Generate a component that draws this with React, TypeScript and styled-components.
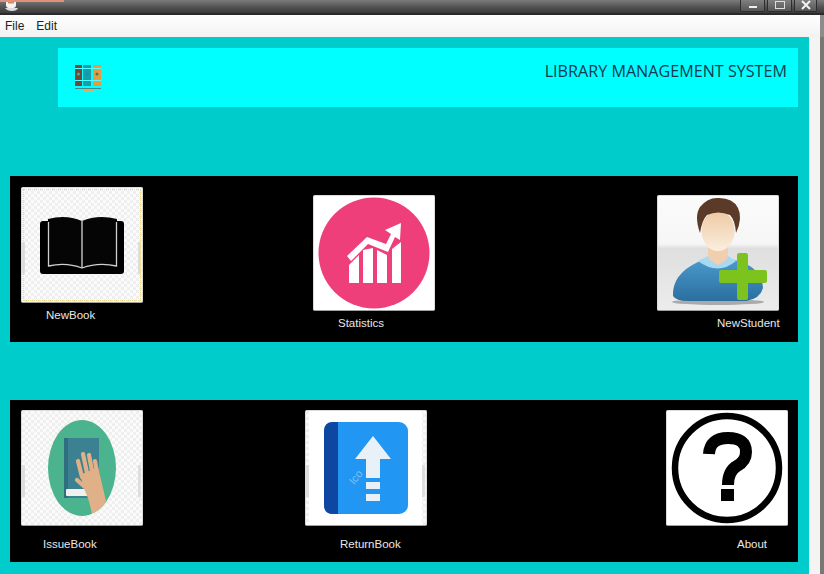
import * as React from 'react';
import styled, { createGlobalStyle } from 'styled-components';

const GlobalStyle = createGlobalStyle`
  html, body {
    margin: 0;
    padding: 0;
    background: #f3f3f1;
    overflow: hidden;
  }
`;

const Frame = styled.div`
  width: 824px;
  height: 574px;
  display: flex;
  flex-direction: column;
  font-family: 'Liberation Sans', Arial, sans-serif;
  overflow: hidden;
`;

const TitleBar = styled.div`
  height: 13px;
  flex: none;
  display: flex;
  justify-content: space-between;
  background: linear-gradient(#7c7c7c 0, #6a6a6a 3px, #4e4e4e 8px, #3c3c3c 100%);
  border-bottom: 2px solid #2a2a2a;
`;

const TitleAccent = styled.div`
  width: 64px;
  height: 2px;
  background: #e0917c;
`;

const CupIcon = styled.svg`
  display: block;
  width: 16px;
  height: 11px;
  margin-left: 3px;
`;

const WindowButtons = styled.div`
  display: flex;
  gap: 2px;
  margin-right: 7px;
`;

const WindowButton = styled.div<{ $w: number }>`
  width: ${p => p.$w}px;
  height: 12px;
  display: flex;
  align-items: center;
  justify-content: center;
  background: linear-gradient(#808080, #565656);
  border: 1px solid #2e2e2e;
  border-top: none;
  border-radius: 0 0 2px 2px;
  box-sizing: border-box;
`;

const ButtonIcon = styled.svg`
  width: 14px;
  height: 11px;
`;

const MenuBar = styled.div`
  height: 22px;
  flex: none;
  display: flex;
  align-items: center;
  gap: 12px;
  padding-left: 5px;
  font-size: 12px;
  color: #222;
  background: linear-gradient(#ffffff, #f2f2f2);
  border-right: 4px solid #8c8c8c;
`;

const Body = styled.div`
  flex: 1;
  display: flex;
  min-height: 0;
`;

const Content = styled.div`
  width: 799px;
  height: 536px;
  padding: 11px 0 0 10px;
  background: #00cccc;
  display: flex;
  flex-direction: column;
`;

const SideStrip = styled.div`
  flex: 1;
  display: flex;
  justify-content: flex-end;
  background: #f4f4f2;
`;

const SideEdge = styled.div`
  width: 4px;
  background: #777;
`;

const Header = styled.div`
  height: 59px;
  width: 740px;
  margin-left: 48px;
  background: #00ffff;
  display: flex;
  justify-content: space-between;
  box-sizing: border-box;
  padding: 14px 11px 0 16px;
`;

const Logo = styled.svg`
  display: block;
  width: 30px;
  height: 30px;
`;

const Title = styled.div`
  font-family: 'Open Sans', sans-serif;
  font-size: 16.15px;
  line-height: 20px;
  margin-top: -1px;
  color: #123b50;
`;

const Panel = styled.div<{ $h: number; $top: number }>`
  width: 788px;
  height: ${p => p.$h}px;
  margin-top: ${p => p.$top}px;
  background: #000;
  display: flex;
`;

const Cell = styled.div<{ $left: number; $top: number }>`
  width: 122px;
  margin-left: ${p => p.$left}px;
  padding-top: ${p => p.$top}px;
  flex: none;
`;

const Tile = styled.div<{ $focus?: boolean }>`
  position: relative;
  width: 122px;
  height: 116px;
  box-sizing: border-box;
  background: #fff;
  border: 1px solid #dcdcdc;
  border-bottom-color: #a0a0a0;
  border-radius: 2px;
  overflow: hidden;
  ${p =>
    p.$focus
      ? `&::after {
          content: '';
          position: absolute;
          inset: 1px;
          border: 1px dotted #ecd98c;
        }`
      : ''}
`;

const TileArt = styled.svg`
  display: block;
  width: 120px;
  height: 114px;
`;

const Caption = styled.div<{ $top: number; $left: number }>`
  font-size: 11.5px;
  line-height: 13px;
  color: #e8e8e8;
  white-space: nowrap;
  margin-top: ${p => p.$top}px;
  margin-left: ${p => p.$left}px;
`;

const ART_BOX = '0 0 120 114';

// light checker and the grey slivers at the edges of the stock pictures
const StockBackdrop = ({ id }: { id: string }) => (
  <>
    <defs>
      <pattern id={id} width="6" height="6" patternUnits="userSpaceOnUse">
        <rect width="6" height="6" fill="#fbfbfb" />
        <rect width="3" height="3" fill="#efefef" />
        <rect x="3" y="3" width="3" height="3" fill="#efefef" />
      </pattern>
    </defs>
    <rect width="120" height="114" fill={`url(#${id})`} />
    <rect x="0" y="54" width="3" height="32" fill="#dedede" />
    <rect x="116" y="54" width="3" height="32" fill="#dedede" />
  </>
);

const LogoIcon = () => (
  <Logo viewBox="0 0 30 30">
    <rect x="1" y="3" width="7" height="21" fill="#6d4a3a" />
    <rect x="9" y="3" width="8" height="21" fill="#159fae" />
    <rect x="19" y="3" width="8" height="21" fill="#e99a3e" />
    <path d="M1 6.5h26M1 18.5h26" stroke="#5ff" strokeWidth="1" />
    <circle cx="4.5" cy="12" r="1.5" fill="#3fb59b" />
    <circle cx="13" cy="12" r="1.5" fill="#2b8c98" />
    <circle cx="23" cy="12" r="1.5" fill="#3a7c6e" />
    <rect x="1" y="26" width="26" height="1" fill="#3b8c8c" />
    <rect x="10" y="28" width="9" height="1" fill="#e2b25a" />
  </Logo>
);

const BookArt = () => (
  <TileArt viewBox={ART_BOX}>
    <StockBackdrop id="bookBg" />
    <rect x="18" y="33" width="84" height="53" rx="3" fill="#000" />
    <path d="M26 31 Q44 26 60 33 Q76 26 95 31 V78 Q76 74 60 80 Q44 74 26 78 Z" fill="#050505" />
    <path d="M26.5 34 V78 Q44 74 60 80 Q76 74 94.5 78 V34" fill="none" stroke="#cfcfcf" strokeWidth="1.3" />
    <path d="M60 33 V80" stroke="#d6d6d6" strokeWidth="1.3" />
  </TileArt>
);

const StatsArt = () => (
  <TileArt viewBox={ART_BOX}>
    <rect width="120" height="114" fill="#fff" />
    <circle cx="60" cy="57" r="55.5" fill="#ee3f7a" />
    <g fill="#fff">
      <path d="M35 69 L45 59 V87 H35 Z" />
      <path d="M49 54 L59 52 V87 H49 Z" />
      <path d="M63 54 L73 59 V87 H63 Z" />
      <path d="M78 53 L87 46 V87 H78 Z" />
      <path d="M33 60 L53 41 L72 48 L77 38 L71 34 L87 27 L86 44 L81 41 L74 56 L54 48 L37 65 Z" />
    </g>
  </TileArt>
);

const StudentArt = () => (
  <TileArt viewBox={ART_BOX}>
    <defs>
      <linearGradient id="wall" x1="0" y1="0" x2="0" y2="1">
        <stop offset="0" stopColor="#fbfbfb" />
        <stop offset="0.42" stopColor="#f6f6f6" />
        <stop offset="0.46" stopColor="#dfdfdf" />
        <stop offset="1" stopColor="#ececec" />
      </linearGradient>
      <linearGradient id="shirt" x1="0" y1="0" x2="0" y2="1">
        <stop offset="0" stopColor="#4c9bce" />
        <stop offset="1" stopColor="#2a6f9e" />
      </linearGradient>
      <linearGradient id="face" x1="0" y1="0" x2="0" y2="1">
        <stop offset="0" stopColor="#eec9a2" />
        <stop offset="1" stopColor="#fbeee0" />
      </linearGradient>
    </defs>
    <rect width="120" height="114" fill="url(#wall)" />
    <ellipse cx="60" cy="106" rx="46" ry="3" fill="#8f8f8f" opacity="0.7" />
    <path d="M15 100 Q14 78 40 66 L52 62 H68 L84 66 Q104 74 105 92 Q102 103 88 105 H30 Q18 105 15 100 Z" fill="url(#shirt)" />
    <path d="M40 65 L50 60 H70 L78 65 Q60 80 40 65 Z" fill="#a9d8f2" />
    <path d="M50 44 H70 V60 Q70 64 60 69 Q50 64 50 60 Z" fill="#f0cfae" />
    <ellipse cx="60" cy="35" rx="16.5" ry="20" fill="url(#face)" />
    <path d="M42 37 Q36 20 42 11 Q50 1 61 2 Q75 2 80 12 Q85 22 78 37 Q77 24 72 19 Q60 14 49 19 Q44 24 42 37 Z" fill="#5b3a28" />
    <path d="M79 59 Q79 57 81 57 H88 Q90 57 90 59 V74 H107 Q109 74 109 76 V85 Q109 87 107 87 H90 V102 Q90 104 88 104 H81 Q79 104 79 102 V87 H63 Q61 87 61 85 V76 Q61 74 63 74 H79 Z" fill="#7cc31e" />
  </TileArt>
);

const IssueArt = () => (
  <TileArt viewBox={ART_BOX}>
    <StockBackdrop id="issueBg" />
    <defs>
      <clipPath id="issueOval">
        <ellipse cx="60" cy="57" rx="34" ry="48" />
      </clipPath>
    </defs>
    <ellipse cx="60" cy="57" rx="34" ry="48" fill="#4cb38f" />
    <rect x="42" y="27" width="35" height="60" fill="#3b8191" />
    <rect x="42" y="27" width="4" height="60" fill="#2f6e7c" />
    <rect x="44" y="78" width="24" height="7" rx="1" fill="#f0f0ee" />
    <g clipPath="url(#issueOval)">
      <path d="M58 64 L76 56 L84 90 L76 108 L70 104 Q68 90 63 80 Z" fill="#e0b088" />
      <path d="M56 50 L60 66 M61 43 L65 62 M67 44 L70 60 M73 50 L75 62 M55 69 L64 77" fill="none" stroke="#e0b088" strokeWidth="4.2" strokeLinecap="round" />
    </g>
  </TileArt>
);

const Watermark = styled.text`
  font-family: 'Liberation Sans', Arial, sans-serif;
  font-size: 11px;
  fill: #7fc0f6;
`;

const ReturnArt = () => (
  <TileArt viewBox={ART_BOX}>
    <StockBackdrop id="returnBg" />
    <rect x="3" y="0" width="113" height="114" fill="#fff" />
    <rect x="18" y="11" width="84" height="92" rx="9" fill="#2196f3" />
    <path d="M27 11 H32 V103 H27 Q18 103 18 94 V20 Q18 11 27 11 Z" fill="#0d47a1" />
    <path d="M67 25 L85 48 H74 V67 H60 V48 H49 Z" fill="#e8f1f8" />
    <rect x="60" y="71" width="14" height="7" fill="#e8f1f8" />
    <rect x="60" y="83" width="14" height="7" fill="#e8f1f8" />
    <Watermark transform="rotate(-52 50 72)" x="47" y="72">Ico</Watermark>
  </TileArt>
);

const AboutArt = () => (
  <TileArt viewBox={ART_BOX}>
    <rect width="120" height="114" fill="#fff" />
    <circle cx="60" cy="57" r="52" fill="none" stroke="#000" strokeWidth="6.5" />
    <path d="M42 43 Q43 27 61 27 Q79 27 79 41 Q79 50 70 55 Q61 60 61 74" fill="none" stroke="#000" strokeWidth="12" />
    <rect x="54" y="78" width="13" height="12" fill="#000" />
  </TileArt>
);

export default function App() {
  return (
    <Frame>
      <GlobalStyle />
      <TitleBar>
        <div>
          <TitleAccent />
          <CupIcon viewBox="0 0 16 11">
            <path d="M3 0h10v3q0 3-3 3H6Q3 6 3 3Z" fill="#f4f4f4" />
            <path d="M2 6h13q-1 3-6 3T2 6Z" fill="#dcdcdc" />
            <rect x="5" y="0" width="6" height="1.5" fill="#d98a5a" />
          </CupIcon>
        </div>
        <WindowButtons>
          <WindowButton $w={25}>
            <ButtonIcon viewBox="0 0 14 11">
              <rect x="3" y="6" width="8" height="2" fill="#eee" />
            </ButtonIcon>
          </WindowButton>
          <WindowButton $w={25}>
            <ButtonIcon viewBox="0 0 14 11">
              <rect x="2.5" y="1.5" width="9" height="7" fill="none" stroke="#ddd" strokeWidth="1" />
            </ButtonIcon>
          </WindowButton>
          <WindowButton $w={23}>
            <ButtonIcon viewBox="0 0 14 11">
              <path d="M3 1l8 8M11 1l-8 8" stroke="#f2f2f2" strokeWidth="2" />
            </ButtonIcon>
          </WindowButton>
        </WindowButtons>
      </TitleBar>
      <MenuBar>
        <span>File</span>
        <span>Edit</span>
      </MenuBar>
      <Body>
        <Content>
          <Header>
            <LogoIcon />
            <Title>LIBRARY MANAGEMENT SYSTEM</Title>
          </Header>
          <Panel $h={166} $top={69}>
            <Cell $left={11} $top={11}>
              <Tile $focus>
                <BookArt />
              </Tile>
              <Caption $top={6} $left={25}>NewBook</Caption>
            </Cell>
            <Cell $left={170} $top={19}>
              <Tile>
                <StatsArt />
              </Tile>
              <Caption $top={6} $left={25}>Statistics</Caption>
            </Cell>
            <Cell $left={222} $top={19}>
              <Tile>
                <StudentArt />
              </Tile>
              <Caption $top={6} $left={60}>NewStudent</Caption>
            </Cell>
          </Panel>
          <Panel $h={162} $top={58}>
            <Cell $left={11} $top={10}>
              <Tile>
                <IssueArt />
              </Tile>
              <Caption $top={12} $left={22}>IssueBook</Caption>
            </Cell>
            <Cell $left={162} $top={10}>
              <Tile>
                <ReturnArt />
              </Tile>
              <Caption $top={12} $left={35}>ReturnBook</Caption>
            </Cell>
            <Cell $left={239} $top={10}>
              <Tile>
                <AboutArt />
              </Tile>
              <Caption $top={12} $left={71}>About</Caption>
            </Cell>
          </Panel>
        </Content>
        <SideStrip>
          <SideEdge />
        </SideStrip>
      </Body>
    </Frame>
  );
}
